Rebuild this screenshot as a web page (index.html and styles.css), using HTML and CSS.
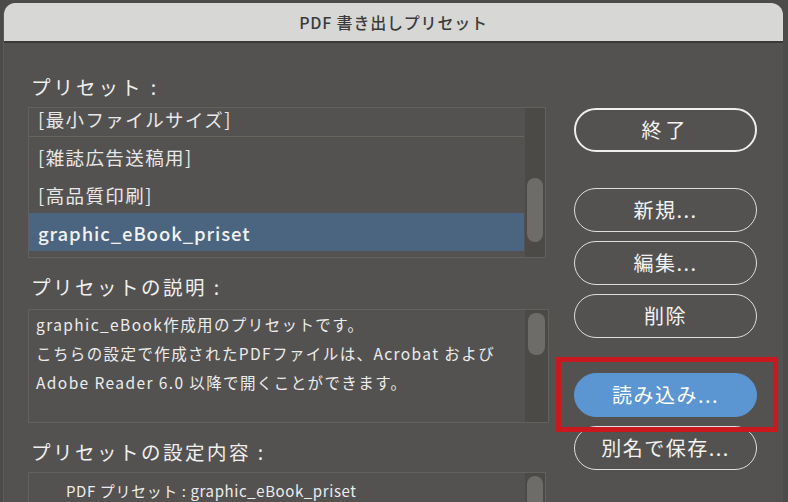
FILE: index.html
```html
<!DOCTYPE html>
<html lang="ja">
<head>
<meta charset="utf-8">
<title>PDF 書き出しプリセット</title>
<link rel="stylesheet" href="styles.css">
</head>
<body>
<div class="dialog">
  <div class="titlebar">PDF 書き出しプリセット</div>
  <div class="content">
    <div class="left">
      <div class="label label-first">プリセット :</div>
      <div class="box list-box">
        <ul class="presets">
          <li class="preset sep">[最小ファイルサイズ]</li>
          <li class="preset">[雑誌広告送稿用]</li>
          <li class="preset">[高品質印刷]</li>
          <li class="preset selected">graphic_eBook_priset</li>
        </ul>
        <div class="track"><div class="thumb thumb-list"></div></div>
      </div>

      <div class="label">プリセットの説明 :</div>
      <div class="box desc-box">
        <div class="desc">
          <p>graphic_eBook作成用のプリセットです。</p>
          <p>こちらの設定で作成されたPDFファイルは、Acrobat および</p>
          <p>Adobe Reader 6.0 以降で開くことができます。</p>
        </div>
        <div class="track track-desc"><div class="thumb thumb-desc"></div></div>
      </div>

      <div class="label">プリセットの設定内容 :</div>
      <div class="box settings-box">
        <div class="settings">PDF プリセット : graphic_eBook_priset</div>
        <div class="track"><div class="thumb thumb-settings"></div></div>
      </div>
    </div>

    <div class="right">
      <button class="btn btn-default">終了</button>
      <button class="btn btn-new">新規...</button>
      <button class="btn">編集...</button>
      <button class="btn">削除</button>
      <div class="load-wrap">
        <button class="btn btn-primary">読み込み...</button>
        <div class="highlight"></div>
      </div>
      <button class="btn">別名で保存...</button>
    </div>
  </div>
</div>
</body>
</html>
```

FILE: styles.css
```css
* {
  box-sizing: border-box;
}

html, body {
  margin: 0;
  padding: 0;
  height: 100%;
  overflow: hidden;
}

body {
  background: #4c4b49;
  font-family: "Noto Sans CJK JP", "Noto Sans", sans-serif;
  color: #ececec;
}

.dialog {
  margin: 3px 5px 0 3px;
  height: 499px;
  background: #545250;
  border-radius: 12px 12px 0 0;
  overflow: hidden;
  border-left: 1px solid #5c5a58;
}

.titlebar {
  height: 40px;
  background: #d7d7d5;
  border-bottom: 2px solid #3a3937;
  color: #3b3b3b;
  font-size: 16px;
  font-weight: 500;
  line-height: 38px;
  text-align: center;
  letter-spacing: 0.8px;
}

.content {
  display: flex;
  padding-left: 24px;
}

/* left column: labels and list boxes */
.left {
  width: 521px;
  display: flex;
  flex-direction: column;
}

.label {
  height: 24px;
  line-height: 24px;
  font-size: 19.5px;
  letter-spacing: 2.5px;
  color: #efefef;
  margin-top: 17px;
  padding-left: 3px;
}

.label-first {
  margin-top: 32px;
  letter-spacing: 3px;
}

.box {
  position: relative;
  border: 1px solid #63615e;
  background: #545250;
  overflow: hidden;
  display: flex;
}

.list-box {
  width: 518px;
  height: 151px;
  margin-top: 8px;
}

.presets {
  list-style: none;
  margin: -9px 0 0 0;
  padding: 0;
  flex: 1;
}

.preset {
  height: 38px;
  line-height: 40px;
  padding-left: 9px;
  margin-right: 1px;
  font-size: 18.5px;
  color: #e8e8e8;
  letter-spacing: 1.4px;
  white-space: nowrap;
}

.preset.sep {
  border-bottom: 1px solid #68665f;
}

.preset.selected {
  background: #4b6580;
  color: #f2f2f2;
  font-weight: 500;
  letter-spacing: 0.9px;
}

.track {
  width: 20px;
  flex: none;
  background: #4b4a47;
  position: relative;
}

.thumb {
  position: absolute;
  left: 2px;
  width: 16px;
  background: #6e6c68;
  border-radius: 8px;
}

.thumb-list {
  top: 70px;
  height: 64px;
}

.desc-box {
  width: 521px;
  height: 114px;
  margin-top: 10px;
}

.desc {
  flex: 1;
  padding: 0 0 0 7px;
}

.desc p {
  margin: 0;
  height: 29px;
  line-height: 28px;
  font-size: 15.5px;
  color: #ececec;
  letter-spacing: 1.4px;
  white-space: nowrap;
}

.track-desc {
  width: 23px;
}

.thumb-desc {
  top: 3px;
  left: 3px;
  width: 17px;
  height: 42px;
}

.settings-box {
  width: 518px;
  height: 60px;
  margin-top: 8px;
}

.settings {
  flex: 1;
  padding-left: 37px;
  line-height: 36px;
  font-size: 15px;
  color: #ececec;
  letter-spacing: 0.6px;
  white-space: nowrap;
}

.thumb-settings {
  top: 3px;
  height: 42px;
}

/* right column: command buttons */
.right {
  margin-left: 25px;
  width: 183px;
  display: flex;
  flex-direction: column;
}

.btn {
  width: 183px;
  height: 44px;
  margin-top: 9px;
  border: 1.5px solid #dedede;
  border-radius: 22px;
  background: transparent;
  color: #f2f2f2;
  font-family: inherit;
  font-size: 20px;
  letter-spacing: 1.5px;
  padding: 0 0 2px 0;
}

.btn-default {
  margin-top: 65px;
  border: 2.5px solid #eeeeee;
  letter-spacing: 4px;
}

.btn-new {
  margin-top: 36px;
}

.load-wrap {
  position: relative;
  margin-top: 35px;
  height: 44px;
}

.load-wrap .btn {
  margin-top: 0;
}

.btn-primary {
  background: #5b96d2;
  border-color: #5b96d2;
  color: #ffffff;
}

/* red callout frame around the import button */
.highlight {
  position: absolute;
  left: -18px;
  top: -16px;
  width: 222px;
  height: 75px;
  border: 5px solid #c9191f;
}
```
